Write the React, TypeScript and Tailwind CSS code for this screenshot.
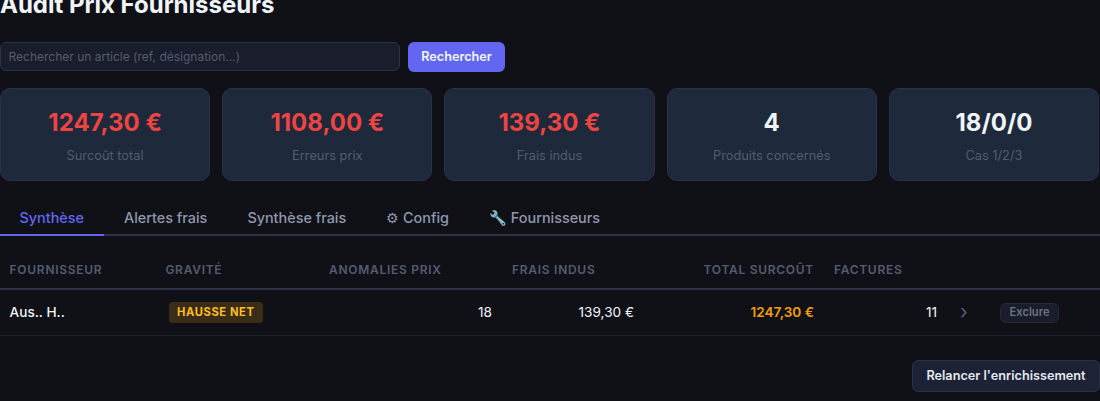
export default function App() {
  const stats = [
    { v: "1247,30 €", l: "Surcoût total", c: "text-[#ef4444]" },
    { v: "1108,00 €", l: "Erreurs prix", c: "text-[#ef4444]" },
    { v: "139,30 €", l: "Frais indus", c: "text-[#ef4444]" },
    { v: "4", l: "Produits concernés", c: "text-[#f1f5f9]" },
    { v: "18/0/0", l: "Cas 1/2/3", c: "text-[#f1f5f9]" },
  ];
  const tabs = ["Synthèse", "Alertes frais", "Synthèse frais", "⚙ Config", "🔧 Fournisseurs"];
  return (
    <div className="h-[401px] w-[1100px] overflow-hidden bg-[#0f1117] font-['Inter','Noto_Sans',sans-serif] text-[#f1f5f9]">
      <h1 className="mt-[-11px] h-[32px] text-[24px] leading-[32px] font-bold text-[#f1f5f9]">Audit Prix Fournisseurs</h1>
      <div className="mt-[21px] flex items-start gap-2">
        <input
          readOnly
          placeholder="Rechercher un article (ref, désignation...)"
          className="h-[29px] w-[400px] rounded-md border border-[#2d3148] bg-[#1a1d2b] pr-2 pl-[7.5px] text-[12px] text-[#f1f5f9] outline-none placeholder:text-[#555c72]"
        />
        <button className="h-[30px] w-[97px] rounded-md bg-[#6366f1] text-[12.7px] font-semibold text-[#f1f5f9]">Rechercher</button>
      </div>
      <div className="mt-[16px] grid w-[1099px] grid-cols-5 gap-3">
        {stats.map((s) => (
          <div key={s.l} className="flex h-[93px] flex-col items-center rounded-[10px] border border-[#2d3148] bg-[#1e293b] pt-[18px]">
            <div className={`text-[24px] leading-[32px] font-bold ${s.c}`}>{s.v}</div>
            <div className="mt-[8px] text-[12.8px] leading-[18px] text-[#555c72]">{s.l}</div>
          </div>
        ))}
      </div>
      <div className="mt-[18px] flex h-[37px] border-b-2 border-[#2d3148]">
        {tabs.map((t, i) => (
          <div
            key={t}
            className={`mb-[-2px] flex h-[37px] items-center border-b-2 pt-[2px] pr-[20px] text-[14.4px] font-medium ${i === 0 ? "border-[#6366f1] pl-[19.5px] text-[#6366f1]" : "border-transparent pl-[20px] text-[#8f98ad]"}`}
          >
            {t}
          </div>
        ))}
      </div>
      <table className="mt-[12px] w-[1100px] table-fixed border-collapse text-[13.6px]">
        <colgroup>
          <col className="w-[155px]" />
          <col className="w-[165px]" />
          <col className="w-[182px]" />
          <col className="w-[142px]" />
          <col className="w-[180px]" />
          <col className="w-[123px]" />
          <col className="w-[43px]" />
          <col />
        </colgroup>
        <thead>
          <tr className="h-[41px] border-b-2 border-[#2d3148] text-[12px] tracking-[0.72px] text-[#555c72] uppercase">
            <th className="px-[9.6px] pt-[4px] text-left font-semibold">Fournisseur</th>
            <th className="px-[10.4px] pt-[4px] text-left font-semibold">Gravité</th>
            <th className="px-[9px] pt-[4px] text-left font-semibold">Anomalies prix</th>
            <th className="px-[10px] pt-[4px] text-left font-semibold">Frais indus</th>
            <th className="px-[10px] pt-[4px] text-right font-semibold">Total surcoût</th>
            <th className="px-[10px] pt-[4px] text-left font-semibold">Factures</th>
            <th />
            <th />
          </tr>
        </thead>
        <tbody>
          <tr className="h-[46px] border-b border-[#1e2130]">
            <td className="px-[9.6px] font-medium">Aus.. H..</td>
            <td className="px-[10px]">
              <span className="ml-[4px] inline-block rounded-[4px] bg-[#3b2c17] px-[8px] py-[3px] text-[11.2px] leading-[15px] font-bold tracking-[0.6px] text-[#fbbf24]">HAUSSE NET</span>
            </td>
            <td className="px-[10px] text-right">18</td>
            <td className="px-[10px] text-right">139,30 €</td>
            <td className="px-[10px] text-right font-semibold text-[#f59e0b]">1247,30 €</td>
            <td className="px-[10px] text-right">11</td>
            <td className="pl-[13px] text-left text-[20px] leading-[20px] text-[#555c72]">›</td>
            <td>
              <button className="mb-[1px] ml-[10px] h-[20px] w-[59px] rounded-[6px] border border-[#252938] bg-[#1a1d2b] pb-[1px] text-[11.2px] font-semibold text-[#6b7280]">Exclure</button>
            </td>
          </tr>
        </tbody>
      </table>
      <div className="mt-[24px] flex justify-end">
        <button className="h-[32px] w-[188px] rounded-md border border-[#2d3148] bg-[#1e2235] text-[12.7px] font-semibold text-[#e2e8f0]">Relancer l'enrichissement</button>
      </div>
    </div>
  );
}
